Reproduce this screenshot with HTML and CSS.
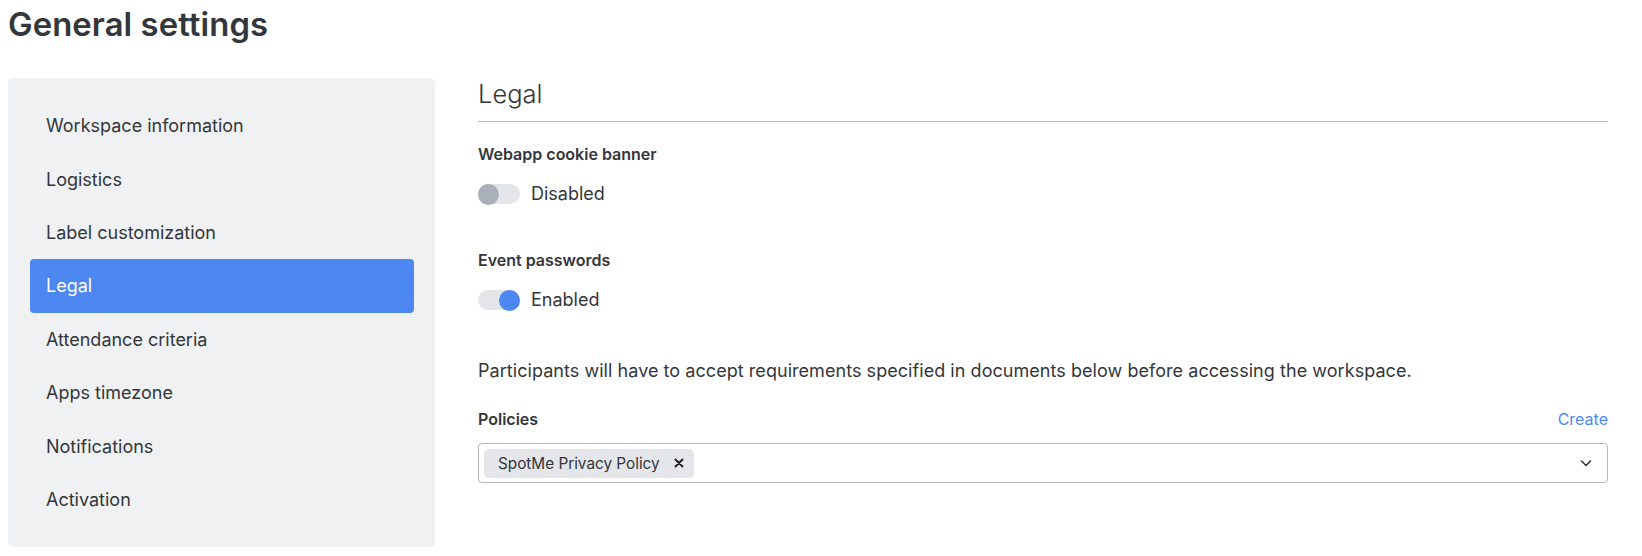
FILE: index.html
```html
<!DOCTYPE html>
<html>

<head>
    <title>General settings</title>
    <link rel="stylesheet" href="styles.css">
</head>

<body>
    <div class="page">
        <h1 class="page-title">General settings</h1>

        <div class="settings-layout">
            <nav class="settings-nav">
                <a class="nav-item">Workspace information</a>
                <a class="nav-item">Logistics</a>
                <a class="nav-item">Label customization</a>
                <a class="nav-item active">Legal</a>
                <a class="nav-item">Attendance criteria</a>
                <a class="nav-item">Apps timezone</a>
                <a class="nav-item">Notifications</a>
                <a class="nav-item">Activation</a>
            </nav>

            <div class="settings-panel">
                <h2 class="panel-title">Legal</h2>

                <div class="field-label first">Webapp cookie banner</div>
                <label class="toggle-row">
                    <span class="toggle"><span class="knob"></span></span>
                    <span>Disabled</span>
                </label>

                <div class="field-label">Event passwords</div>
                <label class="toggle-row">
                    <span class="toggle on"><span class="knob"></span></span>
                    <span>Enabled</span>
                </label>

                <p class="hint">Participants will have to accept requirements specified in documents below before accessing the workspace.</p>

                <div class="policies-head">
                    <span class="field-label inline">Policies</span>
                    <a class="create-link">Create</a>
                </div>
                <div class="multi-select">
                    <span class="chip">SpotMe Privacy Policy
                        <svg class="chip-remove" width="10" height="10" viewBox="0 0 10 10">
                            <path d="M1.5 1.5 L8.5 8.5 M8.5 1.5 L1.5 8.5" stroke="#222" stroke-width="2" stroke-linecap="round"/>
                        </svg>
                    </span>
                    <svg class="chevron" width="14" height="14" viewBox="0 0 14 14">
                        <path d="M2.5 5 L7 9.5 L11.5 5" fill="none" stroke="#33363b" stroke-width="1.6" stroke-linecap="round" stroke-linejoin="round"/>
                    </svg>
                </div>
            </div>
        </div>
    </div>
</body>

</html>
```

FILE: styles.css
```css
body {
    margin: 0;
    font-family: Inter, "Noto Sans", sans-serif;
    color: #33363b;
    background: #fff;
}

.page {
    padding: 0 8px;
}

.page-title {
    margin: 0;
    font-size: 32.8px;
    font-weight: 600;
    line-height: 48px;
    letter-spacing: 0.1px;
}

.settings-layout {
    display: flex;
    gap: 43px;
    margin-top: 30px;
    padding-right: 26px;
}

.settings-nav {
    width: 427px;
    flex-shrink: 0;
    box-sizing: border-box;
    padding: 21px 21px 21px 22px;
    background-color: #f0f1f3;
    border-radius: 5px;
}

.nav-item {
    display: flex;
    align-items: center;
    height: 53.4px;
    padding: 0 16px;
    font-size: 18px;
    color: #33363b;
    border-radius: 4px;
    cursor: pointer;
}

.nav-item.active {
    background-color: #4d88f2;
    color: #fff;
}

.settings-panel {
    flex: 1;
    font-size: 18px;
}

.panel-title {
    margin: 0;
    padding-bottom: 11px;
    font-size: 25.5px;
    font-weight: 300;
    line-height: 32px;
    border-bottom: 1px solid #b9b9bc;
}

.field-label {
    margin-top: 44px;
    font-size: 16px;
    font-weight: 600;
    line-height: 20px;
}

.field-label.first {
    margin-top: 22px;
}

.field-label.inline {
    margin-top: 0;
}

.toggle-row {
    display: flex;
    align-items: center;
    gap: 11px;
    margin-top: 18px;
    line-height: 24px;
}

.toggle {
    position: relative;
    width: 42px;
    height: 20px;
    border-radius: 10px;
    background-color: #e3e5e8;
}

.toggle .knob {
    position: absolute;
    top: -0.5px;
    left: 0;
    width: 21px;
    height: 21px;
    border-radius: 50%;
    background-color: #a9b0b9;
}

.toggle.on .knob {
    left: 21px;
    background-color: #4d88f2;
}

.hint {
    margin: 47px 0 0;
    line-height: 24px;
    letter-spacing: 0.05px;
}

.policies-head {
    display: flex;
    justify-content: space-between;
    align-items: center;
    margin-top: 26px;
    line-height: 20px;
}

.create-link {
    color: #4d88f2;
    font-size: 16px;
    cursor: pointer;
}

.multi-select {
    display: flex;
    align-items: center;
    justify-content: space-between;
    height: 40px;
    margin-top: 14px;
    padding: 0 14px 0 5px;
    box-sizing: border-box;
    border: 1px solid #b4b6ba;
    border-radius: 4px;
}

.chip {
    display: flex;
    align-items: center;
    height: 29px;
    padding: 0 10px 0 14px;
    background-color: #e4e6e9;
    border-radius: 5px;
    font-size: 15.3px;
}

.chip-remove {
    margin-left: 14px;
}
```
